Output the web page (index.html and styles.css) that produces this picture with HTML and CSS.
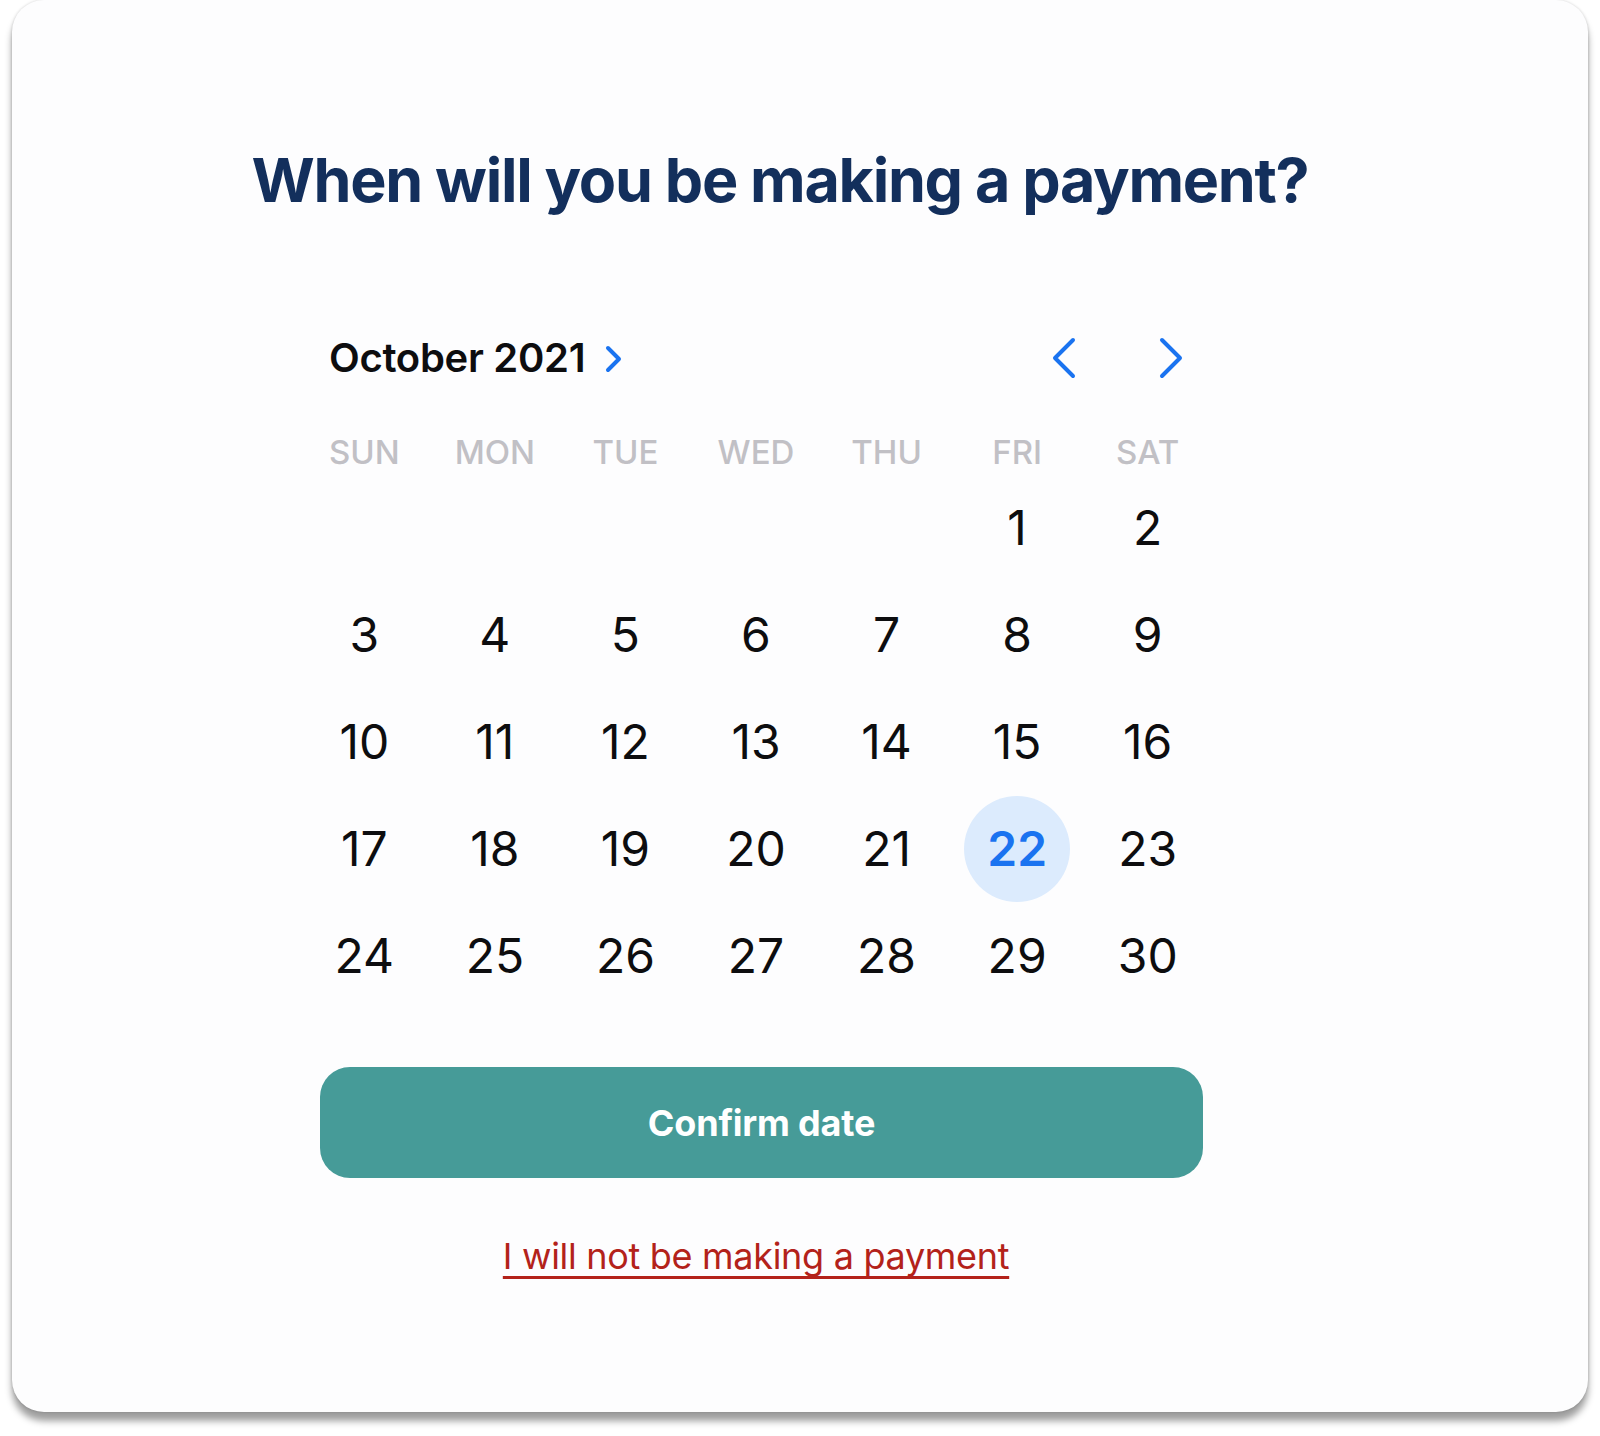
FILE: index.html
```html
<!DOCTYPE html>
<html lang="en">
<head>
<meta charset="utf-8">
<title>Payment date</title>
<link rel="stylesheet" href="styles.css">
</head>
<body>
<div class="card">
  <h1 class="title">When will you be making a payment?</h1>
  <div class="calendar">
    <div class="month-row">
      <div class="month">October 2021
        <svg class="month-chev" width="18" height="28" viewBox="0 0 18 28"><polyline points="3,3 14,14 3,25" fill="none" stroke="#1a73f0" stroke-width="4" stroke-linecap="round" stroke-linejoin="round"/></svg>
      </div>
      <div class="nav">
        <svg class="nav-btn" width="26" height="42" viewBox="0 0 26 42"><polyline points="22,3 4,21 22,39" fill="none" stroke="#1a73f0" stroke-width="4" stroke-linecap="round" stroke-linejoin="round"/></svg>
        <svg class="nav-btn" width="26" height="42" viewBox="0 0 26 42"><polyline points="4,3 22,21 4,39" fill="none" stroke="#1a73f0" stroke-width="4" stroke-linecap="round" stroke-linejoin="round"/></svg>
      </div>
    </div>
    <div class="weekdays">
      <span>SUN</span><span>MON</span><span>TUE</span><span>WED</span><span>THU</span><span>FRI</span><span>SAT</span>
    </div>
    <div class="days">
      <span></span><span></span><span></span><span></span><span></span><span>1</span><span>2</span>
      <span>3</span><span>4</span><span>5</span><span>6</span><span>7</span><span>8</span><span>9</span>
      <span>10</span><span>11</span><span>12</span><span>13</span><span>14</span><span>15</span><span>16</span>
      <span>17</span><span>18</span><span>19</span><span>20</span><span>21</span><span class="selected"><b>22</b></span><span>23</span>
      <span>24</span><span>25</span><span>26</span><span>27</span><span>28</span><span>29</span><span>30</span>
    </div>
    <button class="confirm">Confirm date</button>
    <div class="decline-wrap"><a class="decline" href="#">I will not be making a payment</a></div>
  </div>
</div>
</body>
</html>
```
FILE: styles.css
```css
html, body {
  margin: 0;
  padding: 0;
  background: #ffffff;
}
body {
  font-family: Inter, "Noto Sans", sans-serif;
  height: 1436px;
  overflow: hidden;
}
.card {
  margin: 0 12px;
  height: 1412px;
  box-sizing: border-box;
  background: #fdfdfe;
  border-radius: 32px;
  box-shadow: 0 9px 7px rgba(0, 0, 0, 0.38), 0 0 3px rgba(0, 0, 0, 0.18);
  padding-top: 142px;
}
.title {
  margin: 0;
  padding-right: 40px;
  text-align: center;
  font-size: 61px;
  line-height: 76px;
  font-weight: 700;
  color: #132f5c;
  letter-spacing: -1.3px;
}
.calendar {
  width: 914px;
  margin: 116px 0 0 287px;
}
.month-row {
  display: flex;
  justify-content: space-between;
  align-items: center;
  padding: 0 29px 0 30px;
  height: 48px;
}
.month {
  display: flex;
  align-items: center;
  gap: 20px;
  font-size: 40px;
  line-height: 48px;
  font-weight: 600;
  color: #0d0d0f;
  letter-spacing: -0.3px;
}
.month-chev {
  display: block;
  margin-top: 2px;
}
.nav {
  display: flex;
  gap: 81px;
  align-items: center;
}
.nav-btn {
  display: block;
}
.weekdays {
  margin-top: 50px;
  display: grid;
  grid-template-columns: repeat(7, 1fr);
  text-align: center;
  font-size: 33px;
  line-height: 40px;
  font-weight: 500;
  color: #c1c0c5;
  letter-spacing: 0;
}
.days {
  margin-top: 2px;
  display: grid;
  grid-template-columns: repeat(7, 1fr);
  grid-auto-rows: 107px;
  font-size: 48px;
  color: #0d0d0f;
}
.days span {
  display: flex;
  align-items: center;
  justify-content: center;
}
.days .selected b {
  display: flex;
  align-items: center;
  justify-content: center;
  width: 106px;
  height: 106px;
  border-radius: 50%;
  background: #dcebfd;
  color: #1a73f0;
  font-weight: 600;
}
.confirm {
  display: block;
  margin: 58px 0 0 21px;
  width: 883px;
  height: 111px;
  border: none;
  border-radius: 30px;
  background: #469b98;
  color: #ffffff;
  font-family: Inter, "Noto Sans", sans-serif;
  font-size: 36px;
  font-weight: 700;
  letter-spacing: -0.2px;
}
.decline-wrap {
  margin-top: 56px;
  text-align: center;
  line-height: 44px;
}
.decline {
  font-size: 36px;
  color: #b3221a;
  text-decoration: underline;
  text-decoration-thickness: 3px;
  text-underline-offset: 7px;
  text-decoration-skip-ink: none;
  letter-spacing: -0.3px;
}
```
